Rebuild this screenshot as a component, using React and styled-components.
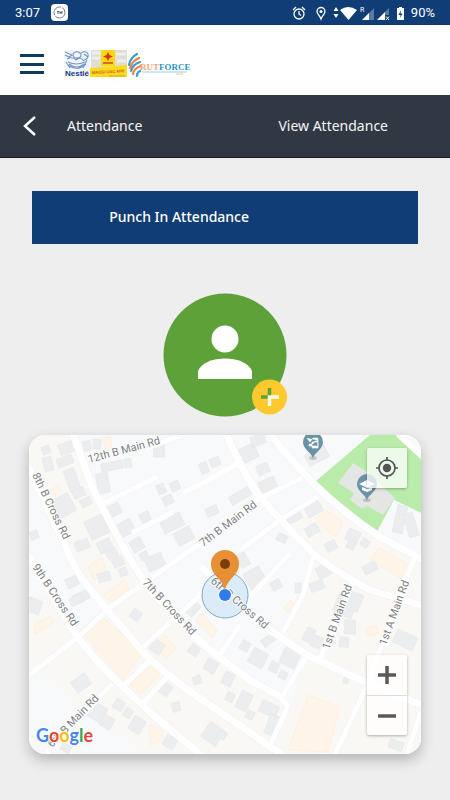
import React from 'react';
import styled, { createGlobalStyle } from 'styled-components';

const GlobalStyle = createGlobalStyle`
	* {
		box-sizing: border-box;
	}

	body {
		margin: 0;
		background: #eee;
		font-family: "Noto Sans", "Liberation Sans", sans-serif;
	}

	button {
		border: none;
		padding: 0;
		background: none;
		font-family: inherit;
		cursor: pointer;
	}
`;

const Page = styled.div`
	min-height: 100vh;
	background: #eee;
`;

const StatusBar = styled.div`
	height: 25px;
	padding: 0 15px;
	display: flex;
	align-items: center;
	justify-content: space-between;
	background: #103d75;
	color: #fff;
	font-family: Roboto, sans-serif;
	font-size: 13px;
	line-height: 25px;
`;

const StatusGroup = styled.div`
	display: flex;
	align-items: center;
	gap: ${ props => props.$gap }px;

	svg {
		display: block;
	}
`;

const AppBar = styled.header`
	height: 70px;
	padding: 8px 20px 0;
	display: flex;
	align-items: center;
	gap: 20px;
	background: #fff;
`;

const MenuBtn = styled.button`
	width: 24px;
	height: 20px;
	display: flex;
	flex-direction: column;
	justify-content: space-between;

	span {
		width: 100%;
		height: 3px;
		background: #0f3a5a;
	}
`;

const NavBar = styled.nav`
	height: 63px;
	padding: 0 62px 0 20px;
	display: flex;
	align-items: center;
	background: #323843;
	border-bottom: 1px solid #141b29;
`;

const BackBtn = styled.button`
	width: 47px;
	height: 24px;
	text-align: left;
`;

const NavLink = styled.a`
	margin-left: ${ props => props.$end ? 'auto' : '0' };
	color: #f4f5f7;
	font-size: 14px;
	line-height: 20px;
	text-decoration: none;
`;

const Content = styled.main`
	padding: 33px 29px 46px;
	display: flex;
	flex-direction: column;
	align-items: center;
`;

const ButtonRow = styled.div`
	width: 100%;
	padding: 0 3px;
`;

const PunchBtn = styled.button`
	width: 100%;
	height: 53px;
	padding: 0 20% 2px;
	background: #103d75;
	color: #fff;
	font-size: 14px;
	font-weight: 500;
	text-align: left;
	border-radius: 0;
`;

const AvatarBtn = styled.button`
	margin: 49px 0 18px;

	svg {
		display: block;
	}
`;

const MapCard = styled.section`
	position: relative;
	width: 100%;
	height: 319px;
	border-radius: 16px;
	overflow: hidden;
	background: #f8f9fb;
	box-shadow: 0 6px 14px rgba(0,0,0,.24);
`;

const MapCanvas = styled.svg`
	display: block;
	width: 100%;
	height: 100%;
	font-family: Roboto, sans-serif;
`;

const MapControls = styled.div`
	position: absolute;
	right: 14px;
	${ props => props.$bottom ? 'bottom: 19px;' : 'top: 13px;' }
	width: 40px;
	display: flex;
	flex-direction: column;
	border-radius: 2px;
	background: rgba(255,255,255,.75);
	box-shadow: 0 1px 3px rgba(0,0,0,.3);
`;

const MapBtn = styled.button`
	height: 40px;
	display: flex;
	align-items: center;
	justify-content: center;

	& + & {
		border-top: 1px solid #ddd;
	}
`;

const land = [
	'29,435 74,435 100,503 143,577 100,600 63,540 29,480',
	'78,638 110,610 153,580 217,655 287,707 268,753 200,753 123,687',
	'29,590 60,600 78,638 125,687 90,720 60,690 29,664',
	'280,520 317,497 345,515 420,558 413,620 353,580 313,553',
	'283,632 313,557 421,605 421,753 270,753 290,705 307,658',
	'110,690 123,687 200,753 140,753 100,720'
];

const shops = [
	'102,438 110,436 112,448 105,449',
	'50,490 59,485 61,490 55,495',
	'88,567 102,557 106,572 94,580',
	'103,595 125,580 130,592 110,602',
	'80,630 100,615 143,652 123,680',
	'34,625 50,616 54,622 36,634',
	'130,684 155,663 161,672 141,695',
	'149,725 162,729 163,738 151,746',
	'156,644 165,635 176,648 166,659',
	'195,620 202,613 217,630 212,638',
	'315,520 325,510 343,522 336,537',
	'370,560 379,548 407,563 401,578',
	'308,695 340,707 328,752 288,750',
	'284,608 291,600 296,607 288,613',
	'366,629 377,625 378,634 368,636'
];

// centre x, centre y, width, height, rotation
const buildings = [
	[46, 450, 8, 8, -20], [48, 464, 9, 14, -15], [66, 448, 14, 11, -20], [65, 461, 16, 9, -20],
	[70, 474, 11, 10, -20], [74, 485, 11, 11, -20], [79, 493, 12, 9, -25], [86, 502, 11, 8, -25],
	[63, 506, 20, 20, -28], [87, 446, 8, 10, -10], [97, 444, 8, 10, 0], [103, 483, 12, 20, -10],
	[159, 451, 11, 12, 0], [128, 463, 7, 9, -10], [112, 466, 22, 8, -12], [161, 489, 8, 10, -20],
	[175, 486, 9, 9, -25], [168, 500, 10, 9, -25], [114, 510, 13, 11, -25], [97, 527, 20, 20, -25],
	[126, 528, 15, 14, -28], [145, 517, 10, 9, -25], [172, 523, 22, 14, -25], [184, 536, 18, 14, -28],
	[212, 511, 12, 9, -25], [204, 468, 8, 11, -20], [215, 462, 10, 9, -20], [82, 545, 14, 10, -20],
	[105, 546, 14, 12, -25], [112, 554, 11, 8, -25], [118, 562, 11, 9, -25], [137, 545, 12, 12, -30],
	[144, 556, 8, 8, -25], [155, 562, 18, 14, -25], [104, 577, 13, 9, -15], [123, 572, 8, 8, -20],
	[34, 535, 8, 8, -20], [72, 582, 12, 10, -25], [81, 597, 16, 9, -25], [34, 606, 14, 14, 20],
	[249, 453, 16, 15, -25], [258, 440, 14, 10, -20], [263, 469, 12, 10, -25], [268, 485, 17, 12, -25],
	[240, 496, 22, 9, -30], [294, 517, 15, 9, -28], [313, 508, 16, 14, -30], [312, 530, 13, 10, -30],
	[331, 546, 11, 9, -28], [353, 536, 13, 12, 25], [351, 545, 8, 8, 25], [365, 543, 8, 8, 35],
	[370, 568, 14, 9, -28], [324, 571, 14, 12, -28], [317, 586, 14, 9, -20], [298, 588, 6, 10, 0],
	[282, 538, 10, 8, 25], [255, 578, 18, 18, -30], [243, 560, 10, 14, -30], [276, 585, 10, 9, -30],
	[317, 456, 22, 12, -28], [400, 519, 10, 28, 12], [411, 525, 10, 24, -18],
	[345, 606, 20, 20, 22], [355, 602, 12, 18, 22], [350, 627, 11, 14, 3], [344, 642, 9, 10, 5],
	[405, 640, 22, 14, 25], [309, 635, 9, 14, 25], [317, 642, 10, 12, 25], [290, 658, 17, 17, 25],
	[245, 646, 9, 10, 30], [258, 658, 16, 16, 28], [270, 639, 18, 8, -35], [274, 667, 9, 10, 25],
	[283, 675, 8, 8, 25], [346, 680, 5, 7, 20], [228, 679, 10, 13, 25], [230, 697, 8, 9, 25],
	[244, 701, 12, 18, 25], [269, 709, 18, 12, 25], [272, 725, 10, 20, 20], [250, 715, 8, 8, 25],
	[396, 745, 14, 9, 20], [77, 600, 14, 8, -25], [136, 615, 10, 10, 35], [157, 647, 12, 12, 35],
	[194, 650, 10, 10, 35], [211, 666, 12, 12, 30], [197, 680, 8, 8, -20], [176, 707, 8, 9, -15],
	[164, 688, 14, 12, 35], [81, 683, 17, 13, -35], [119, 705, 10, 10, 30], [128, 713, 8, 9, 30],
	[137, 725, 13, 15, 32], [97, 712, 16, 16, 32], [107, 722, 12, 12, 30], [213, 734, 18, 18, 35],
	[170, 742, 12, 12, 30], [192, 608, 12, 14, 40], [222, 735, 8, 8, 30], [66, 748, 10, 8, 30]
];

const roads = [
	'M72 430 L83 462 Q92 488 100 503 L122 545 Q133 565 150 590 L193 634 Q210 652 253 682 L283 698',
	'M25 460 L63 540 Q73 570 97 598 L143 652 Q165 675 217 710 L284 756',
	'M25 550 L70 625 Q84 650 123 687 L153 715 L202 756',
	'M225 430 Q236 460 257 493 Q275 515 313 553 Q330 568 370 590 L424 606',
	'M267 430 Q282 450 313 483 Q345 515 380 537 L424 560',
	'M200 566 L267 628 L307 655 L367 683 L424 706',
];

const lanes = [
	'M27 677 L77 638 L112 606 L153 577 L202 542 L257 500 L302 478',
	'M240 550 L280 520 L317 497',
	'M102 504 L157 477',
	'M132 533 L173 512',
	'M183 493 L205 482 L237 464',
	'M150 447 L185 434',
	'M143 647 L197 598 L210 580',
	'M123 686 L151 660',
	'M143 703 L168 676',
	'M112 684 L46 754',
	'M220 655 L240 625',
	'M307 656 L281 698 L288 706 L271 744',
	'M283 632 L303 595 L313 557',
	'M320 659 L353 582',
	'M334 756 L366 688 L403 587 L415 557',
	'M407 754 L421 712',
	'M250 597 L290 553',
];

const labels = [
	['12th B Main Rd', 89, 463, -15],
	['8th B Cross Rd', 32, 475, 64],
	['9th B Cross Rd', 32, 567, 56],
	['7th B Cross Rd', 142, 583, 47],
	['6th B Cross Rd', 210, 582, 41],
	['7th B Main Rd', 203, 547, -37],
	['1st B Main Rd', 329, 650, -70],
	['1st A Main Rd', 386, 646, -70],
	['6th B Main Rd', 52, 748, -46],
];

const Pin = ({ x, y, children }) => (
	<g transform={ `translate(${x} ${y})` }>
		<ellipse cx="0" cy="15" rx="4" ry="2" fill="#000" opacity=".15"/>
		<path d="M0 16 C-1 9 -10 7 -10 -1 A10 10 0 1 1 10 -1 C10 7 1 9 0 16Z" fill="#6b93a8"/>
		{ children }
	</g>
);

const StreetMap = () => (
	<MapCanvas viewBox="29 435 392 319" preserveAspectRatio="xMidYMid slice" role="img" aria-label="Map">
		<rect x="-400" y="435" width="1300" height="319" fill="#f8f9fb"/>
		{ land.map(points => <polygon key={ points } points={ points } fill="#f9f8f4"/>) }
		{ shops.map(points => <polygon key={ points } points={ points } fill="#fff4e8" stroke="#fdf0e1"/>) }
		<polygon points="371,434 397,434 421,456 421,513 394,500 377,532 315,482" fill="#b9ecab"/>
		<path d="M398 434 L424 458" stroke="#fff" strokeWidth="6"/>
		<path d="M353 463 l13 8 l29 27 l-12 17 l-16 -9 l-5 3 l-12 -9 l4 -7 l-16 -10Z" fill="#e3e6e2"/>
		<polygon points="394,500 421,513 421,550 377,532" fill="#f8f9fb"/>
		<g fill="#ecedee" stroke="#e6e7e9" strokeWidth=".6">
			{ buildings.map(([x, y, w, h, r]) => (
				<rect
					key={ `${x}-${y}` }
					x={ x - w / 2 } y={ y - h / 2 } width={ w } height={ h }
					transform={ `rotate(${r} ${x} ${y})` }
				/>
			)) }
		</g>
		<g fill="none" stroke="#f1f2f4" strokeLinejoin="round">
			{ lanes.map(d => <path key={ d } d={ d } strokeWidth="6"/>) }
			{ roads.map(d => <path key={ d } d={ d } strokeWidth="8"/>) }
		</g>
		<g fill="none" stroke="#fff" strokeLinejoin="round">
			{ lanes.map(d => <path key={ d } d={ d } strokeWidth="5"/>) }
			{ roads.map(d => <path key={ d } d={ d } strokeWidth="7"/>) }
		</g>
		<Pin x={ 313 } y={ 443 }>
			<path d="M-6 -5 l3 4 l3 -4 h5 v3 h-3 l-2 3 h-4 v2 h9 v-6 h-2 M-1 -1 h6 v6 h-6z" fill="#fff" stroke="#fff" strokeWidth=".6"/>
		</Pin>
		<Pin x={ 367 } y={ 485 }>
			<path d="M-8 -1 L0 -5 L8 -1 L0 3Z M-5 2 v3 l5 2 l5 -2 v-3 l-5 2z" fill="#fff"/>
		</Pin>
		<circle cx="225" cy="595" r="23" fill="#c5e0f7" fillOpacity=".55" stroke="#7ea9c6"/>
		<g fill="#7d8084" fontSize="11" stroke="#fff" strokeOpacity=".7" strokeWidth="2" paintOrder="stroke">
			{ labels.map(([text, x, y, r]) => (
				<text key={ text } transform={ `translate(${x} ${y}) rotate(${r})` }>{ text }</text>
			)) }
		</g>
		<circle cx="225" cy="595" r="7" fill="#fff"/>
		<circle cx="225" cy="595" r="6" fill="#2f7cf0"/>
		<path d="M225 591 C223 578 211 576 211 564 A14 14 0 0 1 239 564 C239 576 227 578 225 591Z" fill="#e78a2b" fillOpacity=".95"/>
		<circle cx="225" cy="564" r="5" fill="#7a3e0c"/>
		<text x="36" y="742" fontSize="18" fontFamily="Lato, sans-serif" fontWeight="700" stroke="#fff" strokeWidth="2" paintOrder="stroke">
			<tspan fill="#4285f4">G</tspan>
			<tspan fill="#ea4335">o</tspan>
			<tspan fill="#fbbc05">o</tspan>
			<tspan fill="#4285f4">g</tspan>
			<tspan fill="#34a853">l</tspan>
			<tspan fill="#ea4335">e</tspan>
		</text>
	</MapCanvas>
);

const BrandLogo = () => (
	<svg width="126" height="28" viewBox="0 0 126 28" role="img" aria-label="Nestle Maggi OSC App Rutforce">
		<rect width="26" height="27" fill="#f1f5fb"/>
		<g fill="none" stroke="#6f93c6" strokeWidth="1.1">
			<path d="M1 2 L8 5 L5 7 L1 5 M3 9 Q9 6 12 10 M4 12 Q12 16 21 12 M5 14 Q13 20 20 14"/>
			<path d="M9 4 Q12 0 16 3 Q19 7 14 8 Q9 9 9 4Z M17 3 Q22 0 24 4 Q25 9 20 10 M12 10 Q16 6 20 11"/>
			<path d="M4 15 Q13 22 22 14 M2 12 L6 18 M23 10 L19 18 M20 4 L24 7"/>
		</g>
		<text x="1" y="26" fontFamily="Liberation Sans, sans-serif" fontWeight="700" fontSize="8" fill="#17407f">Nestlé</text>
		<rect x="27" width="36" height="19" fill="#dfdfd6"/>
		<path d="M28 3 H37 M28 8 H36 M52 4 H62 M53 11 H62" stroke="#eeeeea" strokeWidth="3"/>
		<rect x="37" y="0" width="14" height="16" rx="1" fill="#f9d90f"/>
		<path d="M44 2 L45.500 5 L49 6.500 L45.500 8 L44 11 L42.500 8 L39 6.500 L42.500 5Z" fill="#d8391e"/>
		<rect x="39" y="12" width="10" height="2" fill="#e2672a"/>
		<path d="M26 18 L63 15 V27 H26Z" fill="#f8da1e"/>
		<text x="28" y="24" transform="rotate(-3 28 24)" fontFamily="Liberation Sans, sans-serif" fontWeight="700" fontSize="4" fill="#d8541e">MAGGI OSC APP</text>
		<path d="M45 26 H61" stroke="#d9a324" strokeWidth="1"/>
		<g fill="none" strokeWidth="2.200" strokeLinecap="round">
			<path d="M65 15 Q66 8 73 4" stroke="#3b9bd0"/>
			<path d="M66 18 Q68 11 75 8" stroke="#ee8240"/>
			<path d="M67 21 Q69 14 76 12" stroke="#3b9bd0"/>
			<path d="M69 24 Q70 18 77 16" stroke="#ee8240"/>
			<path d="M73 26 Q73 22 76 21" stroke="#3b9bd0"/>
		</g>
		<text x="76" y="20" fontFamily="Liberation Serif, serif" fontWeight="700" fontSize="9">
			<tspan fill="#f0a673">RUT</tspan>
			<tspan fill="#2f93c6">FORCE</tspan>
		</text>
		<path d="M78 22 H123" stroke="#9ccbe4" strokeWidth="1"/>
		<path d="M112 24 H119" stroke="#f2c4a2" strokeWidth="1"/>
	</svg>
);

const StatusIcons = () => (
	<svg width="116" height="18" viewBox="0 0 116 18" aria-hidden="true">
		<g fill="none" stroke="#fff" strokeWidth="1.300">
			<circle cx="8" cy="10" r="5"/>
			<path d="M8 7 V10 L10 11.500 M2 6 L5 3 M14 6 L11 3"/>
			<path d="M30 15 C29 12 26 10 26 7.500 A4 4 0 0 1 34 7.500 C34 10 31 12 30 15Z"/>
		</g>
		<circle cx="30" cy="7.500" r="1.500" fill="#fff"/>
		<path d="M45 3 L47.500 7 H42.500Z M45 14 L47.500 10 H42.500Z" fill="#fff"/>
		<path d="M49 6 Q57 0 66 6 L57.500 16Z" fill="#fff"/>
		<text x="69" y="8" fontFamily="Roboto, sans-serif" fontSize="7" fill="#fff">R</text>
		<path d="M83 4 V16 H71Z M98 4 V16 H86Z" fill="#5b7ba3"/>
		<path d="M78 9 V16 H71Z M94 8 V16 H86Z" fill="#fff"/>
		<path d="M94 11 h5 v6 h-5z" fill="#103d75"/>
		<path d="M95 12.500 L98 16 M98 12.500 L95 16" stroke="#fff"/>
		<path d="M106 4 H108 V3 H111 V4 H113 V16 H106Z" fill="#fff"/>
		<path d="M110 6 L107.500 11 H109.500 L109 14 L111.500 9.500 H109.500Z" fill="#103d75"/>
	</svg>
);

export default class App extends React.Component {
	render(){
		return <Page>
			<GlobalStyle/>
			<StatusBar>
				<StatusGroup $gap={ 11 }>
					<span>3:07</span>
					<svg width="17" height="17" viewBox="0 0 17 17" aria-hidden="true">
						<rect width="17" height="17" rx="4" fill="#fff"/>
						<circle cx="8.500" cy="8.500" r="5.500" fill="none" stroke="#6c7b8d" strokeDasharray="13 1"/>
						<path d="M6 7.500 H8 M7 7.500 V10 M9 7 V10 M11 7 V10 M9 8.500 H11" stroke="#33465c" strokeWidth=".8"/>
					</svg>
				</StatusGroup>
				<StatusGroup $gap={ 4 }>
					<StatusIcons/>
					<span>90%</span>
				</StatusGroup>
			</StatusBar>

			<AppBar>
				<MenuBtn aria-label="Menu">
					<span/>
					<span/>
					<span/>
				</MenuBtn>
				<BrandLogo/>
			</AppBar>

			<NavBar>
				<BackBtn aria-label="Back">
					<svg width="20" height="24" viewBox="0 0 20 24">
						<path d="M15 3 L5 12 L15 21" fill="none" stroke="#fff" strokeWidth="2.500"/>
					</svg>
				</BackBtn>
				<NavLink href="#attendance">Attendance</NavLink>
				<NavLink href="#view" $end>View Attendance</NavLink>
			</NavBar>

			<Content>
				<ButtonRow>
					<PunchBtn>Punch In Attendance</PunchBtn>
				</ButtonRow>

				<AvatarBtn aria-label="Add photo">
					<svg width="124" height="124" viewBox="0 0 124 124">
						<circle cx="62" cy="62" r="61.500" fill="#5fa139"/>
						<circle cx="62" cy="46" r="13.500" fill="#fff"/>
						<path d="M35 86 V78 C38 70 50 65.500 62 65.500 C74 65.500 86 70 89 78 V86Z" fill="#fff"/>
						<circle cx="106.500" cy="104" r="17.500" fill="#fdc92e"/>
						<path d="M98 104 H106.500 V95" fill="none" stroke="#5fa139" strokeWidth="3.500"/>
						<path d="M106.500 113 V104 H116" fill="none" stroke="#fffbe9" strokeWidth="3.500"/>
					</svg>
				</AvatarBtn>

				<MapCard>
					<StreetMap/>
					<MapControls>
						<MapBtn aria-label="My location">
							<svg width="24" height="24" viewBox="0 0 24 24">
								<circle cx="12" cy="12" r="8" fill="none" stroke="#555" strokeWidth="1.700"/>
								<circle cx="12" cy="12" r="4.200" fill="#555"/>
								<path d="M12 1 V5 M12 19 V23 M1 12 H5 M19 12 H23" stroke="#555" strokeWidth="1.700"/>
							</svg>
						</MapBtn>
					</MapControls>
					<MapControls $bottom>
						<MapBtn aria-label="Zoom in">
							<svg width="18" height="18" viewBox="0 0 18 18">
								<path d="M0 9 H18 M9 0 V18" stroke="#5a5a5a" strokeWidth="3.500"/>
							</svg>
						</MapBtn>
						<MapBtn aria-label="Zoom out">
							<svg width="18" height="18" viewBox="0 0 18 18">
								<path d="M0 9 H18" stroke="#5a5a5a" strokeWidth="3.500"/>
							</svg>
						</MapBtn>
					</MapControls>
				</MapCard>
			</Content>
		</Page>
	}
}
